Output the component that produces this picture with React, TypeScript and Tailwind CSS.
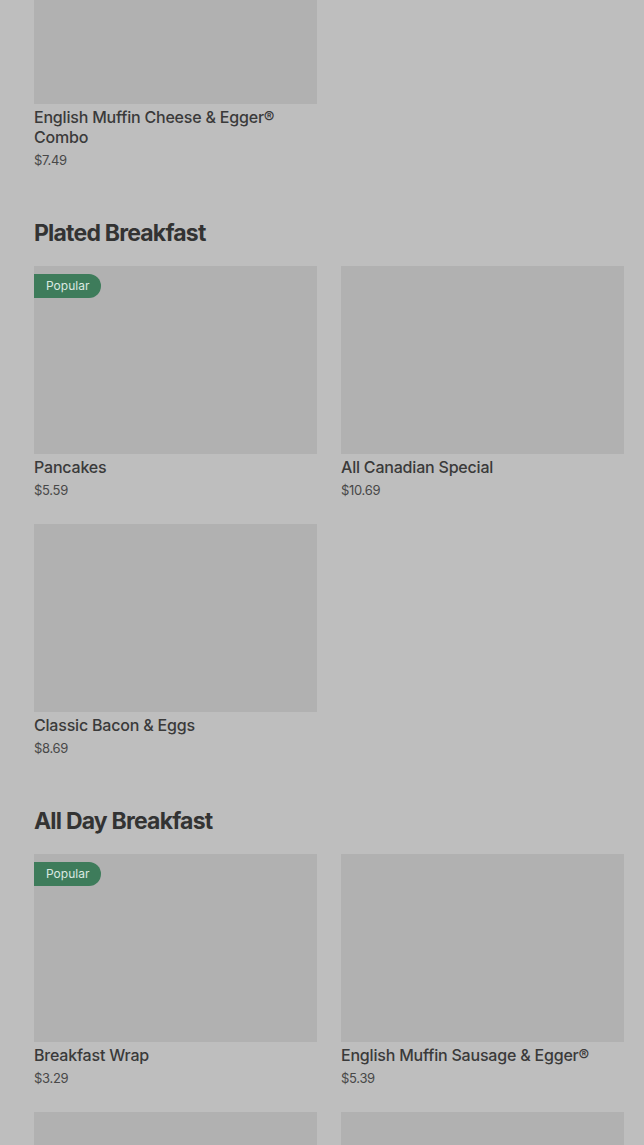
type Item = { name: string; price: string; popular?: boolean }

const sections: { title: string; items: Item[] }[] = [
  {
    title: 'Plated Breakfast',
    items: [
      { name: 'Pancakes', price: '$5.59', popular: true },
      { name: 'All Canadian Special', price: '$10.69' },
      { name: 'Classic Bacon & Eggs', price: '$8.69' },
    ],
  },
  {
    title: 'All Day Breakfast',
    items: [
      { name: 'Breakfast Wrap', price: '$3.29', popular: true },
      { name: 'English Muffin Sausage & Egger®', price: '$5.39' },
      { name: 'Hash Brown', price: '$2.19' },
      { name: 'Sausage McMuffin', price: '$4.49' },
    ],
  },
]

function Card({ item }: { item: Item }) {
  return (
    <div className="flex flex-col">
      <div className="relative h-[188px] bg-[#b1b1b1]">
        {item.popular && (
          <span className="absolute left-0 top-2 h-6 pl-3 pr-3 flex items-center rounded-r-full bg-[#3e7c5b] text-[12px] text-[#dbe9e1]">
            Popular
          </span>
        )}
      </div>
      <div className="mt-[3px] text-[16px] leading-5 font-medium tracking-[-0.2px] text-[#3a3a3a]">{item.name}</div>
      <div className="mt-[3px] text-[13px] leading-5 tracking-[-0.3px] text-[#484848]">{item.price}</div>
    </div>
  )
}

export default function App() {
  return (
    <div
      className="h-[1145px] bg-[#bebebe] overflow-hidden pl-[34px] pr-[20px]"
      style={{ fontFamily: 'Inter, "Noto Sans", sans-serif' }}
    >
      <div className="-mt-[84px] grid grid-cols-2 gap-x-[24px]">
        <Card item={{ name: 'English Muffin Cheese & Egger® Combo', price: '$7.49' }} />
      </div>
      {sections.map((s) => (
        <section key={s.title} className="mt-[47px]">
          <h2 className="text-[23px] leading-8 font-bold tracking-[-0.8px] text-[#333]">{s.title}</h2>
          <div className="mt-[17px] grid grid-cols-2 gap-x-[24px] gap-y-[24px]">
            {s.items.map((it) => (
              <Card key={it.name} item={it} />
            ))}
          </div>
        </section>
      ))}
    </div>
  )
}
